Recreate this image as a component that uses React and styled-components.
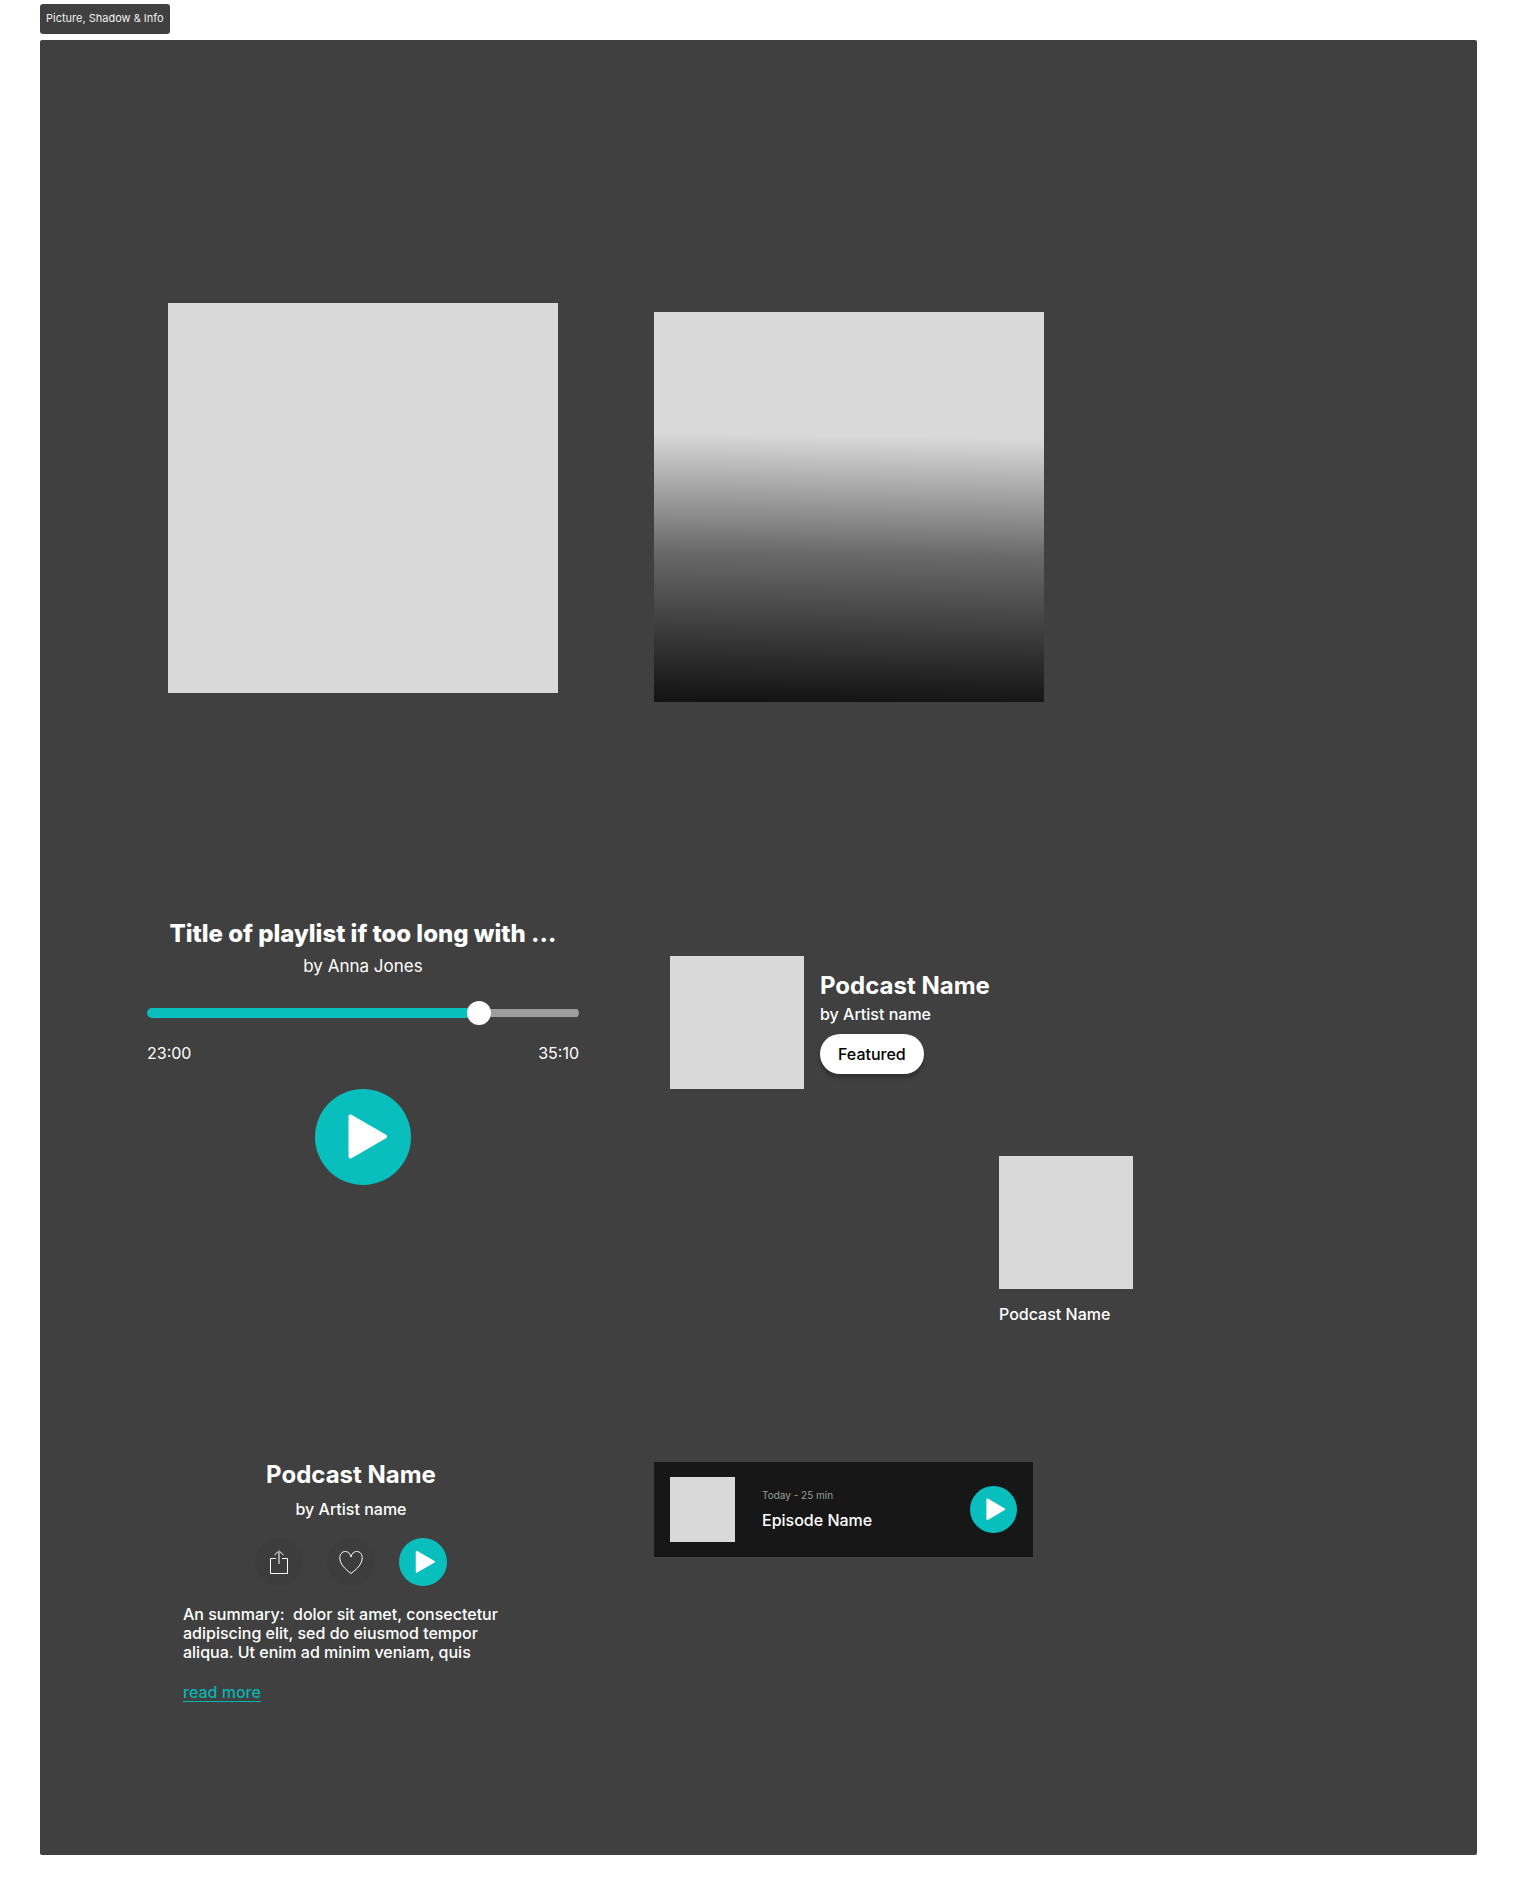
import React, { useState } from "react";
import styled, { createGlobalStyle } from "styled-components";

const color = {
  board: "#404040",
  placeholder: "#d9d9d9",
  accent: "#09bfbe",
  link: "#0bb3b2",
  dark: "#171717",
  muted: "#9b9b9b",
  text: "#ffffff",
};

const GlobalStyle = createGlobalStyle`
  *, *::before, *::after { box-sizing: border-box; }
  body {
    margin: 0;
    background: #ffffff;
    color: ${color.text};
    font-family: Inter, "Liberation Sans", sans-serif;
    font-size: 16px;
    font-weight: 500;
    line-height: 20px;
  }
  h2, p { margin: 0; }
  button { border: 0; padding: 0; font: inherit; cursor: pointer; }
`;

const Page = styled.main`
  display: flex;
  flex-direction: column;
  align-items: flex-start;
  gap: 6px;
  padding: 4px 40px 40px;
`;

const Tag = styled.p`
  padding: 6px 6px 8px;
  border-radius: 3px;
  background: ${color.board};
  color: #f0f0f0;
  font-size: 11px;
  font-weight: 400;
  line-height: 16px;
`;

const Board = styled.section`
  align-self: stretch;
  display: flex;
  flex-direction: column;
  padding: 263px 107px 153px;
  border-radius: 2px;
  background: ${color.board};
`;

const Row = styled.div`
  display: grid;
  grid-template-columns: 432px minmax(0, 1fr);
  column-gap: 75px;
  align-items: start;
  margin-top: ${(p) => p.$space || 0}px;
`;

const Picture = styled.div`
  justify-self: center;
  width: 390px;
  height: 390px;
  background: ${color.placeholder};
`;

const ShadedPicture = styled(Picture)`
  justify-self: start;
  margin-top: 9px;
  background: linear-gradient(181deg, #d9d9d9 32%, #696969 62%, #141414 99%);
`;

const Player = styled.section`
  display: flex;
  flex-direction: column;
  align-items: center;
`;

const PlayerTitle = styled.h2`
  font-size: 24px;
  line-height: 36px;
  font-weight: 800;
  white-space: nowrap;
`;

const PlayerArtist = styled.p`
  font-size: 17px;
  font-weight: 400;
  line-height: 28px;
`;

const Seek = styled.input`
  appearance: none;
  width: 100%;
  height: 24px;
  margin: 21px 0 16px;
  background: transparent;

  &::-webkit-slider-runnable-track {
    height: 10px;
    border-radius: 5px;
    background:
      linear-gradient(${color.accent}, ${color.accent}) left center / var(--played) 10px no-repeat,
      linear-gradient(#9e9e9e, #9e9e9e) center / 100% 8px no-repeat;
  }
  &::-webkit-slider-thumb {
    appearance: none;
    width: 24px;
    height: 24px;
    margin-top: -7px;
    border-radius: 50%;
    background: #ffffff;
  }
`;

const Times = styled.div`
  display: flex;
  justify-content: space-between;
  width: 100%;
  margin-bottom: 24px;
  font-weight: 400;
  line-height: 24px;
`;

const RoundButton = styled.button`
  flex: none;
  display: block;
  width: ${(p) => p.$size || 48}px;
  height: ${(p) => p.$size || 48}px;
  border-radius: 50%;
  background: ${(p) => (p.$plain ? "#3d3d3d" : color.accent)};

  svg { display: block; width: 100%; height: 100%; }
`;

const Shelf = styled.div`
  display: flex;
  flex-direction: column;
  align-items: flex-start;
  gap: 67px;
  padding: 40px 0 0 16px;
`;

const Cover = styled.div`
  flex: none;
  width: ${(p) => p.$size || 134}px;
  height: ${(p) => p.$size || 133}px;
  background: ${color.placeholder};
`;

const FeaturedPodcast = styled.article`
  display: flex;
  gap: 16px;
`;

const FeaturedText = styled.div`
  display: flex;
  flex-direction: column;
  align-items: flex-start;
  padding-top: 15px;
`;

const Heading = styled.h2`
  font-size: 24px;
  line-height: 29px;
  font-weight: 700;
`;

const FeaturedArtist = styled.p`
  margin: 4px 0 10px;
`;

const Pill = styled.button`
  height: 40px;
  padding: 0 18px;
  border-radius: 20px;
  background: #ffffff;
  color: #000000;
  box-shadow: 0 4px 4px rgba(0, 0, 0, 0.25);
`;

const PodcastCard = styled.article`
  display: flex;
  flex-direction: column;
  gap: 15px;
  margin-left: 329px;
`;

const Details = styled.section`
  justify-self: center;
  display: flex;
  flex-direction: column;
  align-items: center;
  width: 336px;
  margin-right: 24px;
`;

const DetailsArtist = styled.p`
  margin: 10px 0 19px;
`;

const Actions = styled.div`
  display: flex;
  gap: 24px;
`;

const Summary = styled.p`
  align-self: stretch;
  margin: 19px 0 21px;
  line-height: 19px;
  white-space: pre-wrap;
`;

const ReadMore = styled.a`
  align-self: flex-start;
  border-bottom: 1px solid ${color.link};
  color: ${color.link};
  line-height: 18px;
  text-decoration: none;
`;

const Episode = styled.article`
  display: flex;
  align-items: center;
  width: 379px;
  height: 95px;
  margin-top: 2px;
  padding: 0 16px;
  background: ${color.dark};
`;

const EpisodeText = styled.div`
  display: flex;
  flex: 1;
  flex-direction: column;
  gap: 9px;
  padding-left: 27px;
`;

const EpisodeMeta = styled.p`
  color: ${color.muted};
  font-size: 10px;
  font-weight: 400;
  line-height: 12px;
`;

function PlayIcon() {
  return (
    <svg viewBox="0 0 96 96" aria-hidden="true">
      <path d="M35.500 27.500V67.500L70 47.500Z" fill="#fff" stroke="#fff" strokeWidth="4" strokeLinejoin="round" />
    </svg>
  );
}

function ShareIcon() {
  return (
    <svg viewBox="0 0 48 48" fill="none" stroke="#fff" aria-hidden="true">
      <path d="M21 20.500H15.500V35.500H32.500V20.500H27" />
      <path d="M19.500 17L24 12.800L28.500 17" />
      <path d="M24 13V26" stroke="#a0a0a0" strokeWidth="2" />
    </svg>
  );
}

function HeartIcon() {
  return (
    <svg viewBox="0 0 48 48" fill="none" stroke="#fff" aria-hidden="true">
      <path d="M24 19C23.300 15.700 21.200 13.500 18.400 13.500C14.900 13.500 12.800 16.300 12.800 19.700C12.800 26 17.700 30.700 24 35.500C30.300 30.700 35.200 26 35.200 19.700C35.200 16.300 33.100 13.500 29.600 13.500C26.800 13.500 24.700 15.700 24 19Z" />
    </svg>
  );
}

export default function App() {
  const [position, setPosition] = useState(784);

  return (
    <>
      <GlobalStyle />
      <Page>
        <Tag>Picture, Shadow &amp; Info</Tag>
        <Board>
          <Row>
            <Picture />
            <ShadedPicture />
          </Row>

          <Row $space={214}>
            <Player>
              <PlayerTitle>Title of playlist if too long with ...</PlayerTitle>
              <PlayerArtist>by Anna Jones</PlayerArtist>
              <Seek
                type="range"
                aria-label="Playback position"
                min="0"
                max="1000"
                value={position}
                onChange={(e) => setPosition(Number(e.target.value))}
                style={{ "--played": `${position / 10}%` }}
              />
              <Times>
                <span>23:00</span>
                <span>35:10</span>
              </Times>
              <RoundButton $size={96} type="button" aria-label="Play">
                <PlayIcon />
              </RoundButton>
            </Player>

            <Shelf>
              <FeaturedPodcast>
                <Cover />
                <FeaturedText>
                  <Heading>Podcast Name</Heading>
                  <FeaturedArtist>by Artist name</FeaturedArtist>
                  <Pill type="button">Featured</Pill>
                </FeaturedText>
              </FeaturedPodcast>
              <PodcastCard>
                <Cover />
                <p>Podcast Name</p>
              </PodcastCard>
            </Shelf>
          </Row>

          <Row $space={136}>
            <Details>
              <Heading>Podcast Name</Heading>
              <DetailsArtist>by Artist name</DetailsArtist>
              <Actions>
                <RoundButton $plain type="button" aria-label="Share">
                  <ShareIcon />
                </RoundButton>
                <RoundButton $plain type="button" aria-label="Like">
                  <HeartIcon />
                </RoundButton>
                <RoundButton type="button" aria-label="Play">
                  <PlayIcon />
                </RoundButton>
              </Actions>
              <Summary>
                {"An summary:  dolor sit amet, consectetur adipiscing elit, sed do eiusmod tempor aliqua. Ut enim ad minim veniam, quis"}
              </Summary>
              <ReadMore href="#more">read more</ReadMore>
            </Details>

            <Episode>
              <Cover $size={65} />
              <EpisodeText>
                <EpisodeMeta>Today - 25 min</EpisodeMeta>
                <p>Episode Name</p>
              </EpisodeText>
              <RoundButton $size={47} type="button" aria-label="Play episode">
                <PlayIcon />
              </RoundButton>
            </Episode>
          </Row>
        </Board>
      </Page>
    </>
  );
}
